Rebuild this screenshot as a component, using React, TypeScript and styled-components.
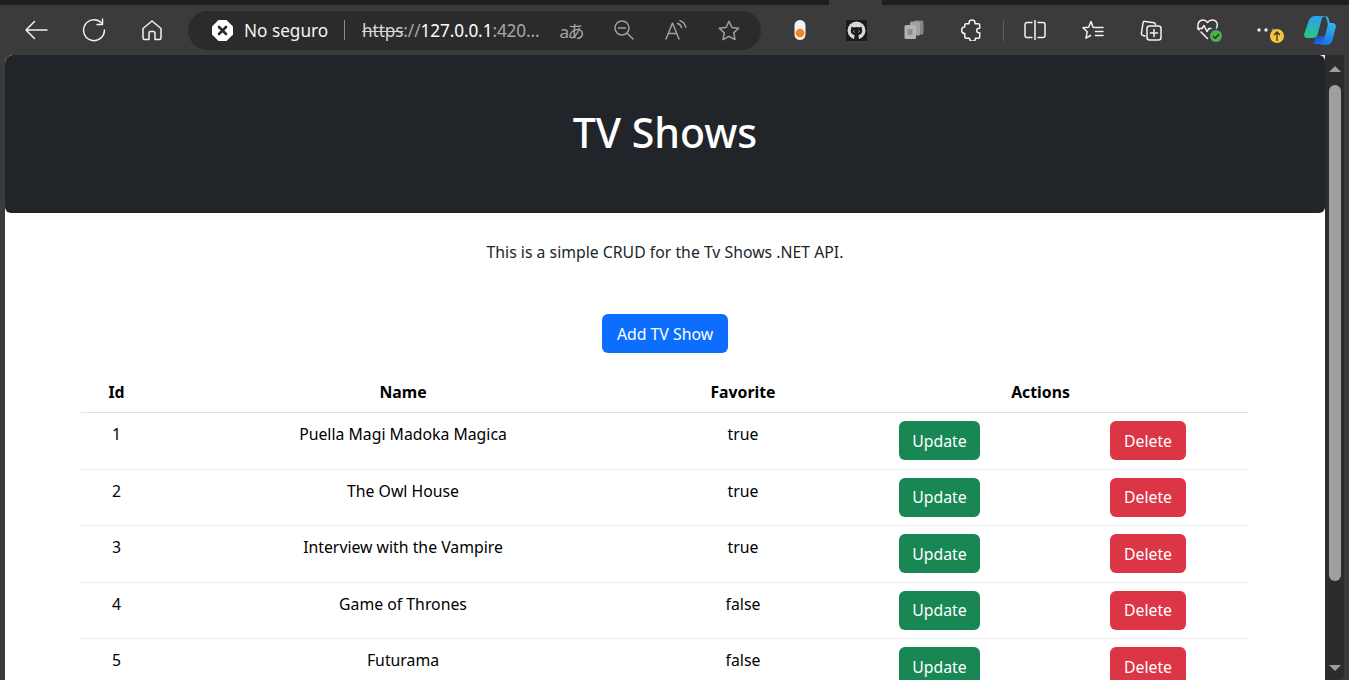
import React from "react";
import styled, { createGlobalStyle } from "styled-components";

const Global = createGlobalStyle`
  html, body { margin: 0; padding: 0; height: 680px; overflow: hidden; background: #3b3b3b; }
  * { box-sizing: border-box; }
  body { font-family: "Noto Sans", "Open Sans", sans-serif; }
`;

const Frame = styled.div`
  width: 1349px; height: 680px; display: flex; flex-direction: column; background: #3b3b3b; overflow: hidden;
`;
const TabStrip = styled.div`
  height: 5px; flex: none; background: #1f1f1f; display: flex; padding-left: 829px;
`;
const ActiveTab = styled.div`
  width: 53px; height: 5px; background: #3b3b3b; position: relative;
`;
const Toolbar = styled.div`
  height: 50px; flex: none; display: flex; align-items: center; padding-left: 7px; color: #f2f2f2;
`;
const Slot = styled.div<{ $w?: number }>`
  width: ${(p) => p.$w ?? 58}px; height: 50px; flex: none; display: flex; align-items: center; justify-content: center; position: relative;
`;
const AddressBar = styled.div`
  width: 573px; height: 39px; flex: none; margin: 0 10px 0 7px; border-radius: 20px; background: #2b2b2b;
  display: flex; align-items: center; padding-left: 24px; font-size: 18px; color: #f4f4f4; white-space: nowrap;
`;
const SecurityText = styled.span`
  margin-left: 11px; width: 85px; font-size: 17.2px;
`;
const BarDivider = styled.span`
  width: 1px; height: 20px; background: #8a8a8a; margin: 0 17px 0 15px; flex: none;
`;
const Url = styled.span`
  width: 180px; font-size: 17.2px; color: #a8a8a8; letter-spacing: -0.1px;
`;
const Struck = styled.span`
  color: #d8d8d8; text-decoration: line-through; text-decoration-thickness: 1px;
`;
const Host = styled.span`
  color: #fff;
`;
const BarIcons = styled.div`
  display: flex; align-items: center; color: #9c9c9c; margin-left: 3px;
`;
const BarIcon = styled.div`
  width: 52.5px; display: flex; justify-content: center; align-items: center; color: #a0a0a0;
`;
const TranslateText = styled.span`
  font-size: 17px; color: #a8a8a8; font-family: "Noto Sans", "Noto Sans CJK JP", sans-serif; letter-spacing: -1.5px;
`;
const ToolSep = styled.div`
  width: 1px; height: 21px; background: #5f5f5f; flex: none; margin: 0 2px 0 2px;
`;
const Main = styled.div`
  flex: 1; display: flex; min-height: 0; padding-left: 5px; padding-right: 5px;
`;
const Page = styled.main`
  width: 1320px; flex: none; background: #fff; border-top-left-radius: 8px; overflow: hidden;
`;
const Hero = styled.header`
  height: 158px; background: #212529; border-radius: 6px; display: flex; align-items: center; justify-content: center;
`;
const Title = styled.h1`
  margin: 0; font-size: 41px; font-weight: 500; color: #fff; line-height: 48px; position: relative; top: -2px;
`;
const Lead = styled.p`
  margin: 27px 0 0; font-size: 15.8px; line-height: 24px; color: #212529; text-align: center;
`;
const AddRow = styled.div`
  display: flex; justify-content: center; margin-top: 50px;
`;
const Btn = styled.button<{ $bg: string; $wide?: boolean }>`
  height: 39px; border: 0; border-radius: 6px; padding: 0 ${(p) => (p.$wide ? "14.5px" : "13.5px")}; background: ${(p) => p.$bg}; vertical-align: top;
  color: #fff; font: 15.8px/24px "Noto Sans", sans-serif;
`;
const Table = styled.table`
  table-layout: fixed; border-collapse: collapse; width: 1168px; margin: 19px 0 0 76px; color: #000; font-size: 15.8px;
`;
const Th = styled.th`
  height: 40px; padding: 8px; text-align: center; font-weight: 700; line-height: 24px; border-bottom: 1px solid #dee2e6;
`;
const Td = styled.td`
  padding: 9px 8px 8px; text-align: center; vertical-align: top; line-height: 24px; border-bottom: 1px solid #e9ecef;
`;
const ActionTd = styled(Td)`
  padding: 8px 8px 8.5px;
`;
const Scrollbar = styled.div`
  width: 19px; flex: none; background: #2c2c2c; border-bottom-right-radius: 6px; display: flex; flex-direction: column; align-items: center; position: relative;
`;
const Arrow = styled.div<{ $down?: boolean }>`
  width: 0; height: 0; border-left: 6px solid transparent; border-right: 6px solid transparent; margin-top: ${(p) => (p.$down ? "auto" : "11px")};
  margin-bottom: ${(p) => (p.$down ? "9px" : "0")};
  ${(p) => (p.$down ? "border-top: 6px solid #9e9e9e;" : "border-bottom: 6px solid #9e9e9e;")}
`;
const Thumb = styled.div`
  width: 12px; height: 496px; margin-top: 13px; border-radius: 6px; background: #9f9f9f;
`;

const S = { fill: "none", stroke: "currentColor", strokeWidth: 1.5, strokeLinecap: "round" as const, strokeLinejoin: "round" as const };

const rows: [number, string, string][] = [
  [1, "Puella Magi Madoka Magica", "true"],
  [2, "The Owl House", "true"],
  [3, "Interview with the Vampire", "true"],
  [4, "Game of Thrones", "false"],
  [5, "Futurama", "false"],
];

export default function App() {
  return (
    <Frame>
      <Global />
      <TabStrip><ActiveTab /></TabStrip>
      <Toolbar>
        <Slot>
          <svg width="24" height="20" viewBox="0 0 24 20" {...S}><path d="M23 10H2M10.500 1.500 2 10l8.500 8.500" /></svg>
        </Slot>
        <Slot>
          <svg width="24" height="24" viewBox="0 0 24 24" {...S}><path d="M19.500 5A10.400 10.400 0 1 0 22.400 12" /><path d="M20.500 1v5.500H15" /></svg>
        </Slot>
        <Slot>
          <svg width="22" height="22" viewBox="0 0 22 22" {...S}><path d="M2 9.500 11 2l9 7.500V19a1.500 1.500 0 0 1-1.500 1.500H14V14a1.500 1.500 0 0 0-1.500-1.500h-3A1.500 1.500 0 0 0 8 14v6.500H3.500A1.500 1.500 0 0 1 2 19Z" /></svg>
        </Slot>
        <AddressBar>
          <svg width="21" height="21" viewBox="0 0 21 21">
            <path fill="#fff" d="M6.500 0h8L21 6.500v8L14.500 21h-8L0 14.500v-8Z" />
            <path d="M7 7l7 7M14 7l-7 7" stroke="#2b2b2b" strokeWidth="2.600" strokeLinecap="round" />
          </svg>
          <SecurityText>No seguro</SecurityText>
          <BarDivider />
          <Url><Struck>https</Struck>://<Host>127.0.0.1</Host>:420...</Url>
          <BarIcons>
            <BarIcon><TranslateText>aあ</TranslateText></BarIcon>
            <BarIcon>
              <svg width="20" height="20" viewBox="0 0 20 20" {...S}><circle cx="8" cy="8" r="7" /><path d="M4.500 8h7M13 13l6 6" /></svg>
            </BarIcon>
            <BarIcon>
              <svg width="22" height="20" viewBox="0 0 22 20" {...S}><path d="M1 19 7.500 3 14 19M3.500 13.500h8M12.500 3.500c2 .5 3.400 1.800 4 4M15 .8c3 .8 5 3 5.700 6.400" /></svg>
            </BarIcon>
            <BarIcon>
              <svg width="22" height="21" viewBox="0 0 22 21" {...S}><path d="m11 1.300 2.900 6.200 6.800.8-5 4.600 1.300 6.700-6-3.300-6 3.300 1.300-6.700-5-4.600 6.800-.8Z" /></svg>
            </BarIcon>
          </BarIcons>
        </AddressBar>
        <Slot $w={57}>
          <svg width="12" height="20" viewBox="0 0 12 20">
            <rect x="0.500" y="0" width="11" height="20" rx="5.500" fill="#f2f2f2" />
            <circle cx="6" cy="13" r="4.300" fill="#f58220" />
          </svg>
        </Slot>
        <Slot $w={57}>
          <svg width="21" height="21" viewBox="0 0 21 21">
            <rect width="21" height="21" fill="#1b1b1b" />
            <circle cx="10.500" cy="10.500" r="9" fill="#d8d8d8" />
            <path d="M5.500 6.500 7.500 7.500a8 8 0 0 1 6 0l2-1 .5 3c.8 2.600-.5 5-3.500 5.500l.5 5h-5l.5-5C5.500 14.500 4.200 12 5 9.500Z" fill="#1b1b1b" />
            <path d="M8.500 10.500l-1 1 1 1M12.500 10.500l1 1-1 1" stroke="#d8d8d8" strokeWidth=".8" fill="none" />
          </svg>
        </Slot>
        <Slot $w={57}>
          <svg width="20" height="20" viewBox="0 0 20 20">
            <rect x="10" y="0.500" width="9.500" height="14" rx="1.500" fill="#858585" />
            <rect x="6" y="1.500" width="10" height="14" rx="1.500" fill="#a0a0a0" />
            <rect x="0.500" y="5" width="11.500" height="14" rx="1.500" fill="#b4b4b4" />
            <rect x="3.500" y="9" width="5" height="6" fill="#8f8f8f" />
          </svg>
        </Slot>
        <Slot $w={59}>
          <svg width="22" height="22" viewBox="0 0 22 22" {...S}><path d="M8 4a3 3 0 0 1 6 0v.800h3.500a1.200 1.200 0 0 1 1.200 1.200v3.200h-.700a2.300 2.300 0 0 0 0 4.600h.700V18a1.200 1.200 0 0 1-1.200 1.200H14.500a3 3 0 0 1-6 0H5a1.200 1.200 0 0 1-1.200-1.200v-3.500a3.200 3.200 0 0 1 0-6.400V6A1.200 1.200 0 0 1 5 4.800h3Z" /></svg>
        </Slot>
        <ToolSep />
        <Slot>
          <svg width="22" height="20" viewBox="0 0 22 20" {...S}><path d="M11 0v20M8 2.500H3A2 2 0 0 0 1 4.500v11a2 2 0 0 0 2 2h5M14 2.500h5a2 2 0 0 1 2 2v11a2 2 0 0 1-2 2h-5" /></svg>
        </Slot>
        <Slot>
          <svg width="22" height="21" viewBox="0 0 22 21" {...S}><path d="M13 7.500h8M13.500 11.500h7.500M13.500 15.500h7.500M13.500 7.500l-2.500-.3L9 1.500 6.600 7.200l-5.600.6 4.200 3.900-1.200 6.500 4.500-2.700" /></svg>
        </Slot>
        <Slot>
          <svg width="22" height="22" viewBox="0 0 22 22" {...S}><path d="M5 17 3 16.500A2 2 0 0 1 1.500 14L3 4a2 2 0 0 1 2.300-1.600L14 3.800A2 2 0 0 1 15.500 5.500V6" /><rect x="7" y="7" width="14" height="14" rx="2.500" /><path d="M14 10.500v7M10.500 14h7" /></svg>
        </Slot>
        <Slot>
          <svg width="26" height="24" viewBox="0 0 26 24">
            <path {...S} d="M3 12C.500 8 2 2.500 6.500 2 9 1.800 10.500 3 11.500 4.500 12.500 3 14.500 1.800 17 2c4 .4 5.500 4.500 3.500 8M1.500 10.500H6l2-3 3 6 2-3h2M5 14l6.500 6.500" />
            <circle cx="20" cy="18" r="6" fill="#4caf50" />
            <path d="m17 18 2.200 2.200 3.800-3.800" stroke="#1c3d1e" strokeWidth="1.500" fill="none" />
          </svg>
        </Slot>
        <Slot>
          <svg width="34" height="26" viewBox="0 0 34 26">
            <circle cx="9" cy="13" r="1.700" fill="#eee" />
            <circle cx="16" cy="13" r="1.700" fill="#eee" />
            <circle cx="23" cy="13" r="1.500" fill="#888" />
            <circle cx="27" cy="19" r="7" fill="#f5c542" />
            <path d="M27 24v-9M24 18l3-3 3 3" stroke="#3a2f10" strokeWidth="1.300" fill="none" />
          </svg>
        </Slot>
        <Slot $w={48}>
          <svg width="32" height="29" viewBox="0 0 32 29">
            <defs>
              <linearGradient id="cpa" x1="0.500" y1="0" x2="0.300" y2="1"><stop offset="0" stopColor="#2b9fe8" /><stop offset="1" stopColor="#2cc58c" /></linearGradient>
              <linearGradient id="cpb" x1="0.600" y1="0" x2="0.400" y2="1"><stop offset="0" stopColor="#39c6ee" /><stop offset="1" stopColor="#1872e4" /></linearGradient>
              <linearGradient id="cpc" x1="0" y1="0" x2="1" y2="1"><stop offset="0" stopColor="#1a3fc0" /><stop offset="1" stopColor="#2f7cf0" /></linearGradient>
            </defs>
            <path d="M8 28c-1.500 0-1 0 0 0h13c2 0 3-1 4-3l1-5H12l-1 4c-.5 2-1.500 3.500-3 4Z" fill="url(#cpc)" />
            <path d="M11 0h10c-1.800.3-3 1.800-3.500 3.500L13.800 18c-.8 2.500-2.300 4-5 4H3.500C1 22 -.4 20.300.2 18L4.700 5C5.600 2 8 0 11 0Z" fill="url(#cpa)" />
            <path d="M21 0c1.800 0 3 1 3.500 2.500L25.700 7h2.500c2.600 0 4.200 1.800 3.600 4.300L28.500 24c-.7 3-3 5-6 5H16c1.800-.4 3-2 3.600-4L23.500 10c.7-3-.5-7.500-2.500-10Z" fill="url(#cpb)" />
          </svg>
        </Slot>
      </Toolbar>
      <Main>
        <Page>
          <Hero><Title>TV Shows</Title></Hero>
          <Lead>This is a simple CRUD for the Tv Shows .NET API.</Lead>
          <AddRow><Btn $bg="#0d6efd" $wide>Add TV Show</Btn></AddRow>
          <Table>
            <colgroup>
              <col width="71" />
              <col width="502" />
              <col width="178" />
              <col width="215" />
              <col width="202" />
            </colgroup>
            <thead>
              <tr>
                <Th>Id</Th>
                <Th>Name</Th>
                <Th>Favorite</Th>
                <Th colSpan={2}>Actions</Th>
              </tr>
            </thead>
            <tbody>
              {rows.map(([id, name, fav]) => (
                <tr key={id}>
                  <Td>{id}</Td>
                  <Td>{name}</Td>
                  <Td>{fav}</Td>
                  <ActionTd><Btn $bg="#198754">Update</Btn></ActionTd>
                  <ActionTd><Btn $bg="#dc3545">Delete</Btn></ActionTd>
                </tr>
              ))}
            </tbody>
          </Table>
        </Page>
        <Scrollbar>
          <Arrow />
          <Thumb />
          <Arrow $down />
        </Scrollbar>
      </Main>
    </Frame>
  );
}
